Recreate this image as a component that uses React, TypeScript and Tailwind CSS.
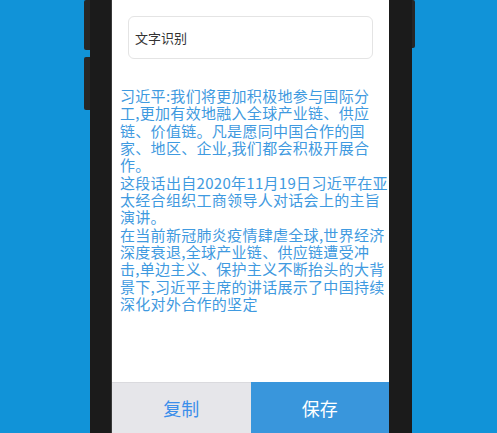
import React from "react";

// OCR result screen inside a phone frame
const LINES: string[] = [
  "习近平:我们将更加积极地参与国际分",
  "工,更加有效地融入全球产业链、供应",
  "链、价值链。凡是愿同中国合作的国",
  "家、地区、企业,我们都会积极开展合",
  "作。",
  "这段话出自2020年11月19日习近平在亚",
  "太经合组织工商领导人对话会上的主旨",
  "演讲。",
  "在当前新冠肺炎疫情肆虐全球,世界经济",
  "深度衰退,全球产业链、供应链遭受冲",
  "击,单边主义、保护主义不断抬头的大背",
  "景下,习近平主席的讲话展示了中国持续",
  "深化对外合作的坚定",
];

export default function App() {
  return (
    <div
      className="w-[497px] h-[433px] overflow-hidden bg-[#1193d8] flex"
      style={{ fontFamily: '"Noto Sans CJK SC", "Noto Sans", sans-serif' }}
    >
      {/* phone body */}
      <div className="relative ml-[90px] w-[322px] h-[460px] bg-[#1b1b1b] flex pl-[21px] pr-[23px]">
        {/* side buttons */}
        <div className="absolute left-[-6px] top-0 w-[6px] h-[50px] bg-[#262626] rounded-l-[2px]" />
        <div className="absolute left-[-6px] top-[57px] w-[6px] h-[53px] bg-[#262626] rounded-l-[2px]" />
        <div className="absolute right-[-3px] top-0 w-[3px] h-[48px] bg-[#262626] rounded-r-[2px]" />

        {/* screen */}
        <div className="w-[278px] h-[434px] bg-white border-l border-[#3a3a3a] flex flex-col">
          <div className="mt-[16px] mx-[16px] h-[43px] border border-[#e4e4e4] rounded-[6px] flex items-center pl-[6px] text-[13px] text-[#333]">
            文字识别
          </div>

          <div className="mt-[28px] pl-[8px] text-[15px] leading-[17.33px] tracking-[0.3px] text-[#3f9ae0]">
            {LINES.map((l, i) => (
              <div key={i} className="whitespace-nowrap">
                {l}
              </div>
            ))}
          </div>

          <div className="flex-1" />

          <div className="h-[52px] flex">
            <div className="flex-1 bg-[#e6e6ea] border-t border-[#dadade] flex items-center justify-center text-[18px] text-[#3b8eea]">
              复制
            </div>
            <div className="flex-1 bg-[#3996dc] flex items-center justify-center text-[18px] text-white">
              保存
            </div>
          </div>
        </div>
      </div>
    </div>
  );
}
